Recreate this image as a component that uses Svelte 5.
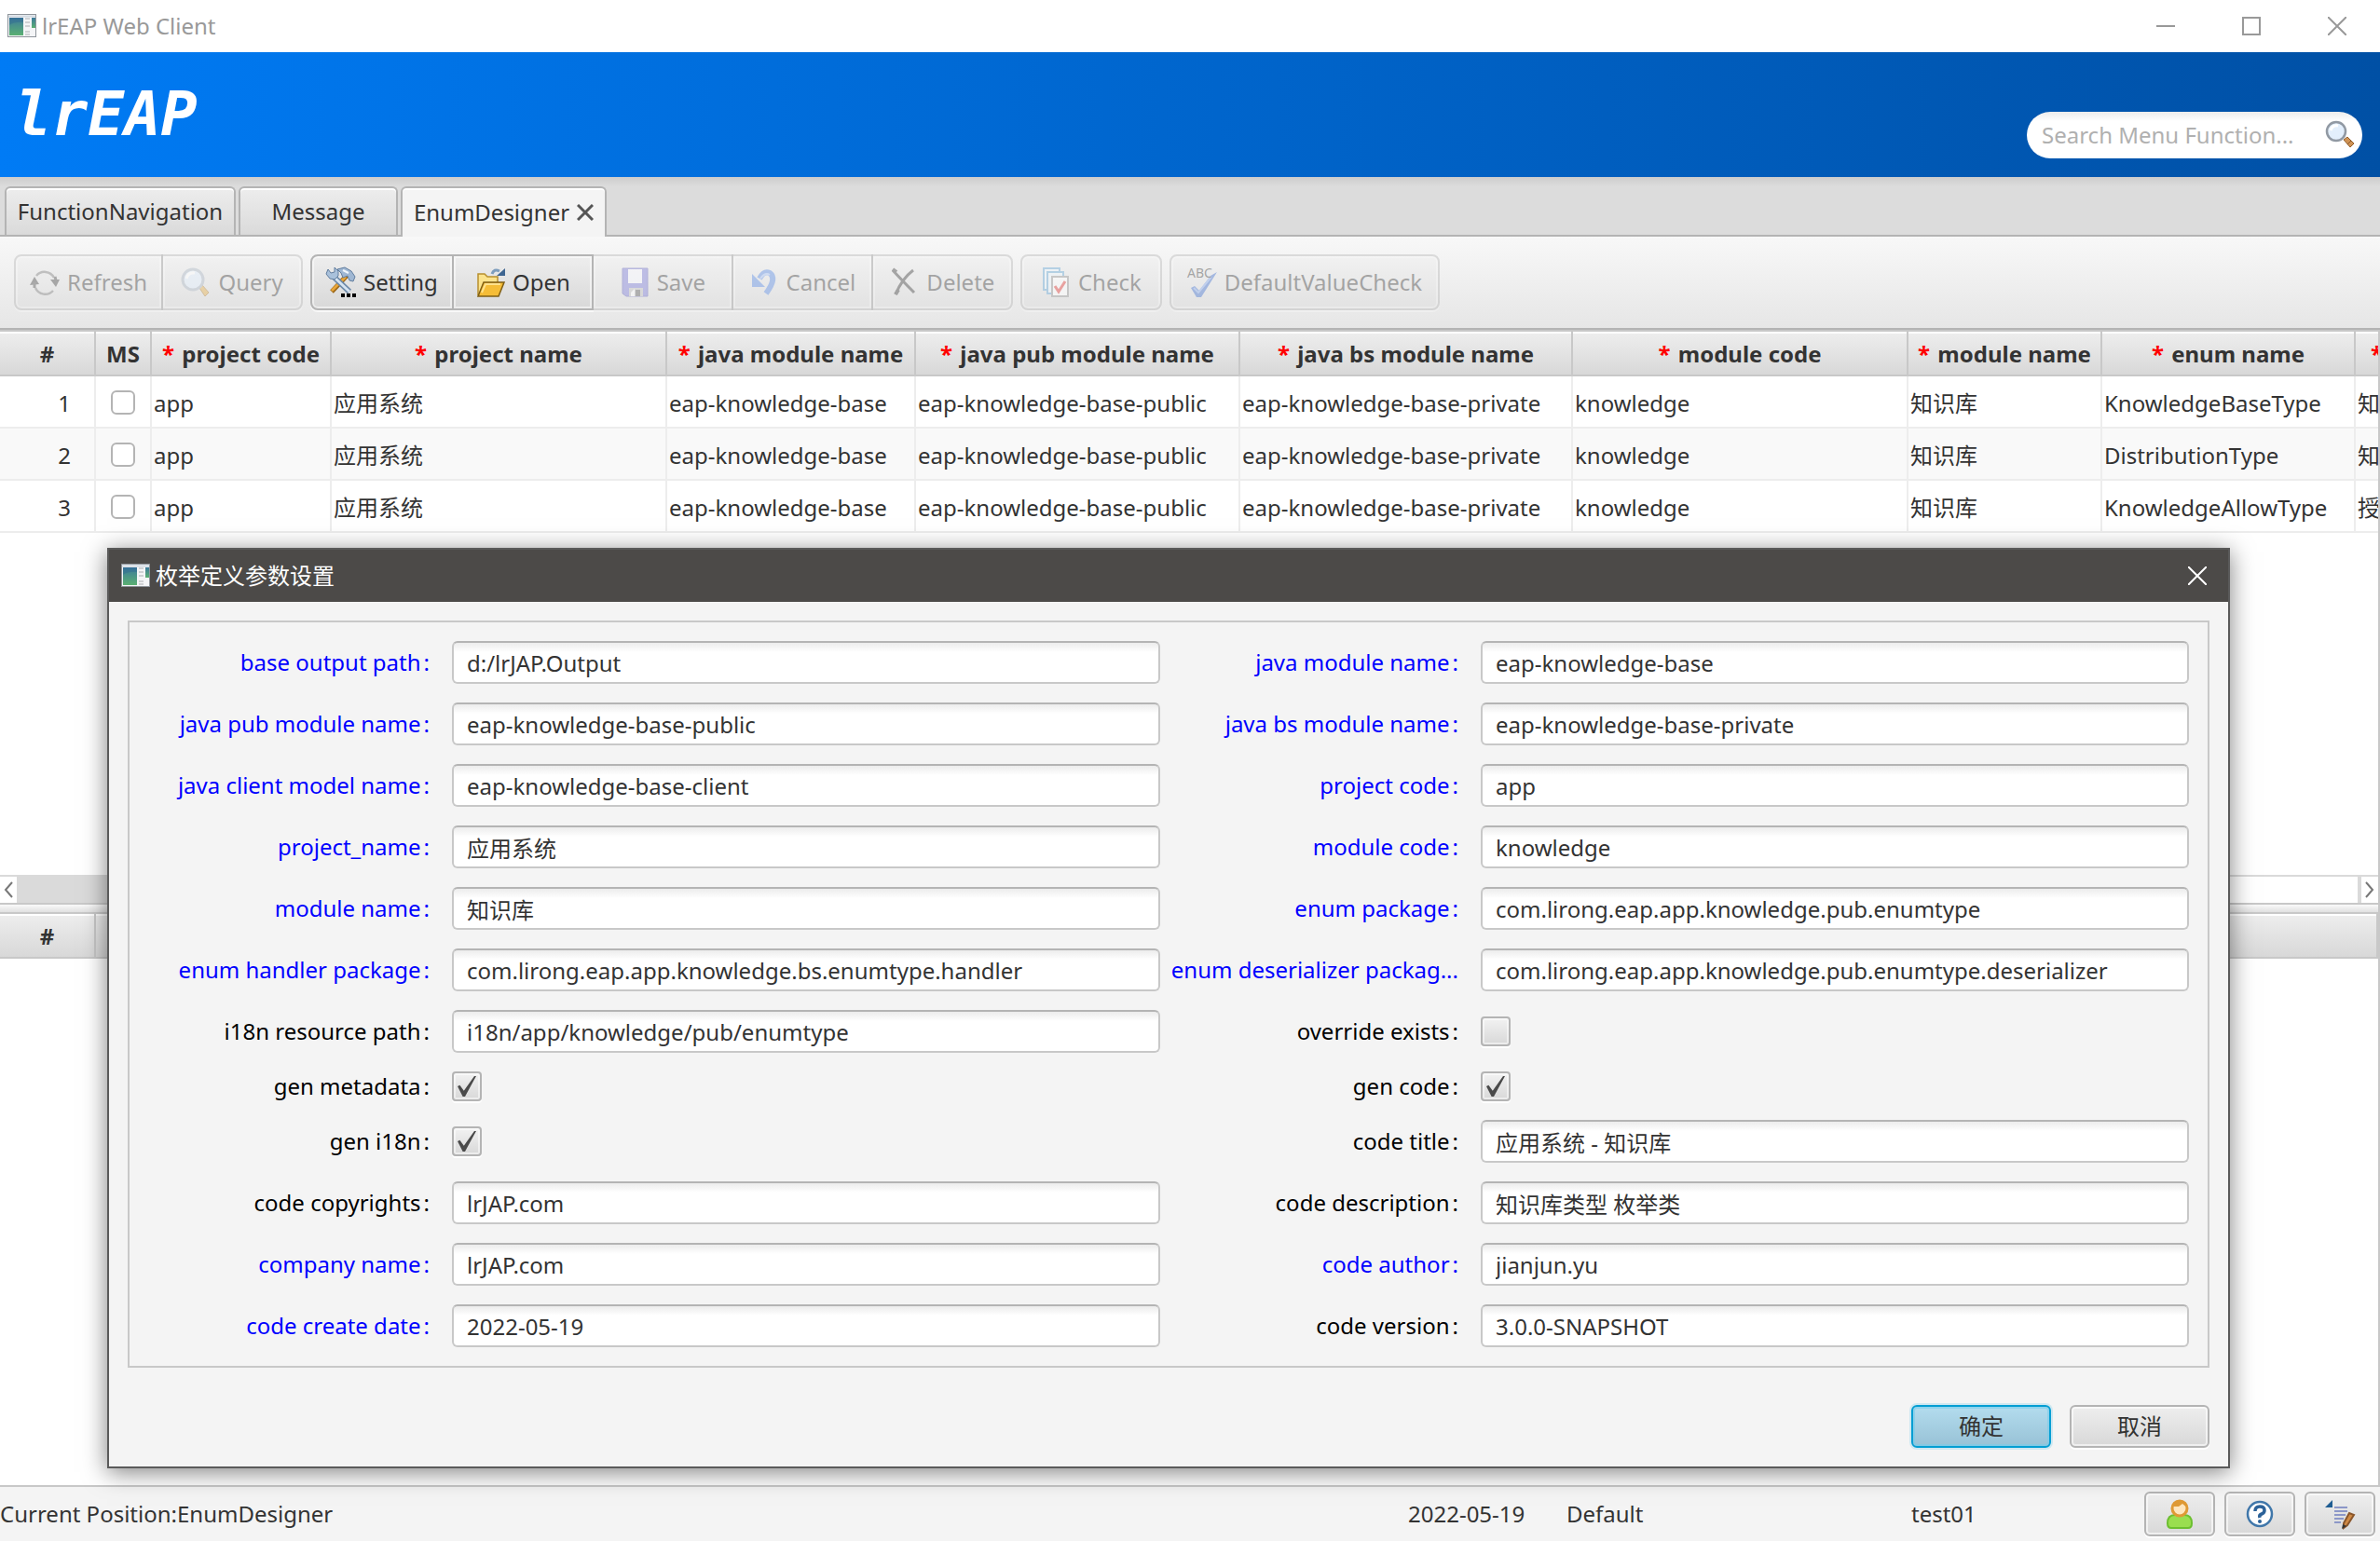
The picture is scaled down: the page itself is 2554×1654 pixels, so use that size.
<script lang="ts">
  type Field = {
    id: string;
    label: string;
    value?: string;
    checked?: boolean;
    type?: 'text' | 'checkbox';
    required?: boolean;
  };

  const columns = [
    { title: 'project code', width: 193 },
    { title: 'project name', width: 360 },
    { title: 'java module name', width: 267 },
    { title: 'java pub module name', width: 348 },
    { title: 'java bs module name', width: 357 },
    { title: 'module code', width: 360 },
    { title: 'module name', width: 208 },
    { title: 'enum name', width: 272 },
    { title: 'enum title', width: 180 },
  ];

  const rows = [
    ['app', '应用系统', 'eap-knowledge-base', 'eap-knowledge-base-public', 'eap-knowledge-base-private', 'knowledge', '知识库', 'KnowledgeBaseType', '知识库类型'],
    ['app', '应用系统', 'eap-knowledge-base', 'eap-knowledge-base-public', 'eap-knowledge-base-private', 'knowledge', '知识库', 'DistributionType', '知识分发'],
    ['app', '应用系统', 'eap-knowledge-base', 'eap-knowledge-base-public', 'eap-knowledge-base-private', 'knowledge', '知识库', 'KnowledgeAllowType', '授权类型'],
  ];

  const toolGroups = [
    [
      { icon: 'refresh', label: 'Refresh', disabled: true, size: 'wide' },
      { icon: 'query', label: 'Query', disabled: true, size: '' },
    ],
    [
      { icon: 'setting', label: 'Setting', disabled: false, size: '' },
      { icon: 'open', label: 'Open', disabled: false, size: '' },
      { icon: 'save', label: 'Save', disabled: true, size: '' },
      { icon: 'cancel', label: 'Cancel', disabled: true, size: '' },
      { icon: 'delete', label: 'Delete', disabled: true, size: '' },
    ],
    [{ icon: 'check', label: 'Check', disabled: true, size: '' }],
    [{ icon: 'spell', label: 'DefaultValueCheck', disabled: true, size: 'widest' }],
  ];

  // Listed row by row: left column, right column
  let fields: Field[] = $state([
    { id: 'outputPath', label: 'base output path', value: 'd:/lrJAP.Output', required: true },
    { id: 'javaModule', label: 'java module name', value: 'eap-knowledge-base', required: true },
    { id: 'javaPubModule', label: 'java pub module name', value: 'eap-knowledge-base-public', required: true },
    { id: 'javaBsModule', label: 'java bs module name', value: 'eap-knowledge-base-private', required: true },
    { id: 'javaClientModel', label: 'java client model name', value: 'eap-knowledge-base-client', required: true },
    { id: 'projectCode', label: 'project code', value: 'app', required: true },
    { id: 'projectName', label: 'project_name', value: '应用系统', required: true },
    { id: 'moduleCode', label: 'module code', value: 'knowledge', required: true },
    { id: 'moduleName', label: 'module name', value: '知识库', required: true },
    { id: 'enumPackage', label: 'enum package', value: 'com.lirong.eap.app.knowledge.pub.enumtype', required: true },
    { id: 'enumHandler', label: 'enum handler package', value: 'com.lirong.eap.app.knowledge.bs.enumtype.handler', required: true },
    { id: 'enumDeserializer', label: 'enum deserializer packag...', value: 'com.lirong.eap.app.knowledge.pub.enumtype.deserializer', required: true },
    { id: 'i18nPath', label: 'i18n resource path', value: 'i18n/app/knowledge/pub/enumtype' },
    { id: 'overrideExists', label: 'override exists', type: 'checkbox', checked: false },
    { id: 'genMetadata', label: 'gen metadata', type: 'checkbox', checked: true },
    { id: 'genCode', label: 'gen code', type: 'checkbox', checked: true },
    { id: 'genI18n', label: 'gen i18n', type: 'checkbox', checked: true },
    { id: 'codeTitle', label: 'code title', value: '应用系统 - 知识库' },
    { id: 'copyrights', label: 'code copyrights', value: 'lrJAP.com' },
    { id: 'description', label: 'code description', value: '知识库类型 枚举类' },
    { id: 'company', label: 'company name', value: 'lrJAP.com', required: true },
    { id: 'author', label: 'code author', value: 'jianjun.yu', required: true },
    { id: 'createDate', label: 'code create date', value: '2022-05-19', required: true },
    { id: 'version', label: 'code version', value: '3.0.0-SNAPSHOT' },
  ]);

  let search = $state('');
  let dialogOpen = $state(true);

  function closeDialog() {
    dialogOpen = false;
  }

  function openDialog(icon: string) {
    if (icon === 'setting') {
      dialogOpen = true;
    }
  }
</script>

{#snippet windowIcon()}
  <svg class="window-icon" viewBox="0 0 32 26" aria-hidden="true">
    <defs>
      <linearGradient id="screen" x1="0" y1="0" x2="0" y2="1">
        <stop offset="0" stop-color="#3c7a9c" />
        <stop offset="1" stop-color="#5bb072" />
      </linearGradient>
    </defs>
    <rect x="0.5" y="0.5" width="30" height="24" fill="#f4f5f7" stroke="#8f959b" />
    <path d="M1 2.5h29" stroke="#d3dae2" stroke-width="2" />
    <rect x="2" y="4" width="15" height="19" fill="url(#screen)" />
    <path d="M2 12Q8 8 17 9V4H2z" fill="#2e6590" opacity="0.4" />
    <path d="M19 5h5M19 9h5M19 13h5M19 19h5M19 22h5" stroke="#c2c5c9" stroke-width="1.5" />
    <rect x="26" y="4" width="4" height="11" fill="url(#screen)" />
  </svg>
{/snippet}

{#snippet toolIcon(name: string)}
  <svg class="icon" viewBox="0 0 32 32" aria-hidden="true">
    {#if name === 'refresh'}
      <path d="M7 9A11.500 11.500 0 0 1 26 11M25 25A11.500 11.500 0 0 1 6 22" fill="none" stroke="#777" stroke-width="2.500" />
      <path d="M27 10Q28 13 28 15" fill="none" stroke="#444" stroke-width="3" />
      <path d="M22 13h10l-4 8zM0 19l5-9 5 8z" fill="#3c3c3c" />
      <path d="M5 16v6" stroke="#444" stroke-width="3" />
    {:else if name === 'query'}
      <path d="M20 22l3-3 7 8-4 4z" fill="#e0a63c" stroke="#a8772a" />
      <circle cx="13" cy="13" r="11" fill="#dcebfb" stroke="#a3afbd" stroke-width="3" />
      <path d="M6 12Q8 5 15 6" fill="none" stroke="#fff" stroke-width="3" />
    {:else if name === 'setting'}
      <path d="M22 9L6 26" stroke="#9a6514" stroke-width="5" />
      <path d="M21 10L6 25" stroke="#e9a63a" stroke-width="3" />
      <path d="M12 2L20 0 27 4 31 10 29 15 25 14 23 9 18 11 16 6z" fill="#9fb7d3" stroke="#627e9f" />
      <path d="M18 3l6 3" stroke="#f1f6fb" stroke-width="2" />
      <path d="M8 10L25 26" stroke="#6b88a8" stroke-width="6" />
      <path d="M8 10L25 26" stroke="#d5e3f1" stroke-width="3" />
      <path d="M2 2l3 4 4-1 0-5 4 4v5l-4 4-5-1-4-5z" fill="#a9c1db" stroke="#627e9f" />
      <path d="M16 28h4v4h-4zM22 28h4v4h-4zM28 28h4v4h-4z" fill="#000" />
    {:else if name === 'open'}
      <path d="M3 30V7h7l3 3h11v8" fill="#fbe38c" stroke="#b8902f" stroke-width="1.500" />
      <path d="M3 31L9 16h22l-6 15z" fill="#f5bd37" stroke="#7e5e14" stroke-width="1.500" />
      <path d="M7 27L11 18h16" fill="none" stroke="#ffe28d" stroke-width="2" />
      <path d="M18 7Q20 1 26 4" fill="none" stroke="#7d9dbd" stroke-width="3" />
      <path d="M23 9h9V1z" fill="#3e6591" />
    {:else if name === 'save'}
      <path d="M3 1h27v30H7l-4-3z" fill="#7272d4" stroke="#5656b5" />
      <path d="M9 2h15v15H9z" fill="#f7f8ff" />
      <path d="M10 22h15v9H10z" fill="#bbb" />
      <path d="M17 24h5v7h-5z" fill="#555" />
      <path d="M12 27l4-4v8h-4z" fill="#fff" />
    {:else if name === 'cancel'}
      <path d="M11 12Q16 3 22 6Q30 12 18 28" fill="none" stroke="#4f83e0" stroke-width="6" />
      <path d="M3 7v14h14z" fill="#4f83e0" />
      <path d="M12 12Q17 5 22 8" fill="none" stroke="#9dbcf5" stroke-width="2" />
    {:else if name === 'delete'}
      <path d="M4 3Q13 13 27 27M26 3Q14 12 7 29" fill="none" stroke="#333" stroke-width="3" />
      <path d="M4 2l4 3M7 29l3-5" stroke="#333" stroke-width="4" />
    {:else if name === 'check'}
      <path d="M3 1h17v23H3z" fill="#eaf4fc" stroke="#5b9fd0" stroke-width="2" />
      <path d="M7 5h17v23H7z" fill="#eaf4fc" stroke="#5b9fd0" stroke-width="2" />
      <path d="M12 10h17v21H12z" fill="#fff" stroke="#8c8c8c" stroke-width="2" />
      <path d="M15 20l4 6 7-11" fill="none" stroke="#e0302b" stroke-width="3" />
    {:else if name === 'spell'}
      <path d="M4 22l4-2 5 5L25 9l7-4-17 27h-5z" fill="#3667c9" />
      <path d="M7 22l5 5L26 10" fill="none" stroke="#7fa3ea" stroke-width="2" />
      <text class="icon-text" x="0" y="11">ABC</text>
    {/if}
  </svg>
{/snippet}

<div class="app">
  <div class="titlebar">
    {@render windowIcon()}
    <span class="caption">lrEAP Web Client</span>
    <button class="win-btn" aria-label="Minimize">
      <svg viewBox="0 0 20 20"><path d="M0 10h20" /></svg>
    </button>
    <button class="win-btn" aria-label="Maximize">
      <svg viewBox="0 0 20 20"><path d="M1 1h18v18H1z" /></svg>
    </button>
    <button class="win-btn" aria-label="Close">
      <svg viewBox="0 0 20 20"><path d="M0 0l20 20M20 0L0 20" /></svg>
    </button>
  </div>

  <header class="banner">
    <span class="logo">lrEAP</span>
    <div class="search">
      <input type="text" aria-label="Search Menu Function" placeholder="Search Menu Function..." bind:value={search} />
      <svg class="icon" viewBox="0 0 32 32" aria-hidden="true">
        <path d="M20 21l4-3 7 7-4 4z" fill="#cf9254" stroke="#96602c" />
        <path d="M24 26l4-4" stroke="#8a5a2c" />
        <circle cx="12" cy="12" r="10" fill="#e3effc" stroke="#9199a3" stroke-width="2.500" />
        <path d="M6 11Q8 5 14 6" fill="none" stroke="#fff" stroke-width="3" />
      </svg>
    </div>
  </header>

  <nav class="tabs">
    <button class="tab">FunctionNavigation</button>
    <button class="tab narrow">Message</button>
    <button class="tab active" aria-current="page">
      EnumDesigner
      <svg viewBox="0 0 18 18" aria-hidden="true"><path d="M1 1l16 16M17 1L1 17" /></svg>
    </button>
  </nav>

  <div class="toolbar">
    {#each toolGroups as group}
      <div class="group">
        {#each group as tool}
          <button class="tool {tool.size}" disabled={tool.disabled} onclick={() => openDialog(tool.icon)}>
            {@render toolIcon(tool.icon)}
            {tool.label}
          </button>
        {/each}
      </div>
    {/each}
  </div>

  <main class="panes">
    <section class="pane">
      <div class="scroller">
        <table>
          <colgroup>
            <col style="width: 103px" />
            <col style="width: 60px" />
            {#each columns as column}
              <col style="width: {column.width}px" />
            {/each}
          </colgroup>
          <thead>
            <tr>
              <th>#</th>
              <th>MS</th>
              {#each columns as column}
                <th><span class="star">*</span> {column.title}</th>
              {/each}
            </tr>
          </thead>
          <tbody>
            {#each rows as row, index}
              <tr>
                <td class="number">{index + 1}</td>
                <td class="pick"><input type="checkbox" aria-label="Select row {index + 1}" /></td>
                {#each row as cell}
                  <td>{cell}</td>
                {/each}
              </tr>
            {/each}
          </tbody>
        </table>
      </div>
      <div class="scrollbar">
        <button class="arrow" aria-label="Scroll left">
          <svg viewBox="0 0 10 18"><path d="M9 1L2 9l7 8" /></svg>
        </button>
        <div class="track"><div class="thumb"></div></div>
        <button class="arrow" aria-label="Scroll right">
          <svg viewBox="0 0 10 18"><path d="M1 1l7 8-7 8" /></svg>
        </button>
      </div>
    </section>

    <div class="splitter"></div>

    <section class="pane">
      <table>
        <colgroup>
          <col style="width: 103px" />
          <col />
        </colgroup>
        <thead>
          <tr><th>#</th><th></th></tr>
        </thead>
      </table>
    </section>
  </main>

  <footer class="status">
    <span>Current Position:EnumDesigner</span>
    <span>2022-05-19</span>
    <span>Default</span>
    <span>test01</span>
    <div class="status-buttons">
      <button class="btn" aria-label="User">
        <svg class="icon" viewBox="0 0 32 32">
          <path d="M3 26q0-9 8-9h10q8 0 8 9 0 5-4 5H7q-4 0-4-5z" fill="#9ade50" stroke="#6cbf2f" stroke-width="2" />
          <circle cx="16" cy="10" r="8" fill="#ffe6bd" stroke="#df9a35" stroke-width="3" />
          <path d="M9 8Q12 1 17 2t7 7l-5-4-4 3z" fill="#df9a35" />
        </svg>
      </button>
      <button class="btn" aria-label="Help">
        <svg class="icon" viewBox="0 0 32 32">
          <circle cx="16" cy="16" r="13" fill="#fff" stroke="#4077aa" stroke-width="2.500" />
          <path d="M11 13q0-5 5-5t5 4q0 3-3 4t-2 4" fill="none" stroke="#2c6299" stroke-width="3.500" />
          <circle cx="16" cy="24" r="2" fill="#2c6299" />
        </svg>
      </button>
      <button class="btn" aria-label="Log">
        <svg class="icon" viewBox="0 0 32 32">
          <path d="M0 9l8-8v8z" fill="#1f5d92" />
          <path d="M10 9h14M10 13h14M10 17h12M10 21h10M10 25h7" stroke="#8c97c8" stroke-width="2" />
          <path d="M20 26l6-11 5 2-7 11-4 3z" fill="#d08a45" stroke="#8a562a" stroke-width="2" />
          <path d="M18 32l1-5 4 2z" fill="#333" />
        </svg>
      </button>
    </div>
  </footer>

  {#if dialogOpen}
    <div class="dialog" role="dialog" aria-labelledby="dialog-title">
      <div class="dialog-title">
        {@render windowIcon()}
        <span class="caption" id="dialog-title">枚举定义参数设置</span>
        <button class="win-btn" aria-label="Close dialog" onclick={closeDialog}>
          <svg viewBox="0 0 20 20"><path d="M0 0l20 20M20 0L0 20" /></svg>
        </button>
      </div>
      <form class="dialog-body" onsubmit={(event) => event.preventDefault()}>
        <div class="fields">
          {#each fields as field (field.id)}
            <div class="field">
              <label for={field.id} class:required={field.required}>
                <span>{field.label}</span>{#if !field.label.endsWith('...')}<span>:</span>{/if}
              </label>
              {#if field.type === 'checkbox'}
                <input type="checkbox" id={field.id} bind:checked={field.checked} />
              {:else}
                <input type="text" id={field.id} bind:value={field.value} />
              {/if}
            </div>
          {/each}
        </div>
        <div class="actions">
          <button class="btn primary" type="submit">确定</button>
          <button class="btn" type="button" onclick={closeDialog}>取消</button>
        </div>
      </form>
    </div>
  {/if}
</div>

<style>
  :global(body) {
    margin: 0;
  }

  .app {
    position: relative;
    display: flex;
    flex-direction: column;
    min-height: 100vh;
    overflow: hidden;
    background: #fff;
    color: #333;
    font-family: 'Noto Sans', 'Noto Sans CJK SC', sans-serif;
    font-size: 24px;
    line-height: 32px;
  }

  .app *,
  .app *::before {
    box-sizing: border-box;
  }

  button,
  input {
    margin: 0;
    color: inherit;
    font: inherit;
  }

  .icon {
    flex: none;
    width: 32px;
    height: 32px;
    overflow: visible;
  }

  .icon-text {
    fill: #333;
    font-size: 14px;
  }

  /* Window title bars */
  .titlebar,
  .dialog-title {
    display: flex;
    align-items: center;
    height: 56px;
  }

  .titlebar {
    padding-left: 8px;
    color: #999;
  }

  .window-icon {
    flex: none;
    width: 32px;
    height: 26px;
    margin-right: 5px;
  }

  .caption {
    flex: 1;
  }

  .win-btn {
    display: flex;
    align-items: center;
    justify-content: center;
    width: 92px;
    height: 100%;
    padding: 0;
    border: none;
    background: none;
  }

  .win-btn svg {
    width: 20px;
    height: 20px;
    fill: none;
    stroke: currentColor;
    stroke-width: 2;
  }

  /* Banner */
  .banner {
    display: flex;
    align-items: center;
    justify-content: space-between;
    height: 134px;
    padding: 0 19px 0 16px;
    background: linear-gradient(to right, #007bf5, #0050a5);
  }

  .logo {
    color: #fff;
    font-family: 'DejaVu Sans Mono', monospace;
    font-size: 65px;
    font-style: italic;
    font-weight: bold;
    line-height: 72px;
  }

  .search {
    display: flex;
    align-items: center;
    width: 360px;
    height: 50px;
    margin-top: 44px;
    padding: 0 8px 0 16px;
    border-radius: 25px;
    background: linear-gradient(#ececec, #fff 10px);
  }

  .search input {
    flex: 1;
    min-width: 0;
    padding: 0;
    border: none;
    outline: none;
    background: none;
  }

  .search input::placeholder {
    color: #b0b0b0;
    opacity: 1;
  }

  /* Tabs */
  .tabs {
    display: flex;
    align-items: flex-end;
    gap: 3px;
    height: 64px;
    padding-left: 5px;
    border-bottom: 2px solid #b4b4b4;
    background: linear-gradient(#cdcdcd, #dcdcdc 10px);
  }

  .tab {
    display: flex;
    align-items: center;
    justify-content: center;
    gap: 8px;
    min-width: 248px;
    height: 52px;
    padding: 0 8px;
    border: 2px solid #b4b4b4;
    border-bottom: none;
    border-radius: 6px 6px 0 0;
    background: linear-gradient(#ededed, #dadada);
    box-shadow: inset 0 2px #fff;
  }

  .tab.narrow {
    min-width: 171px;
  }

  .tab.active {
    min-width: 221px;
    height: 54px;
    margin-bottom: -2px;
    background: #f4f4f4;
  }

  .tab svg {
    width: 18px;
    height: 18px;
    fill: none;
    stroke: #555;
    stroke-width: 3;
  }

  /* Toolbar */
  .toolbar {
    display: flex;
    align-items: center;
    gap: 8px;
    height: 100px;
    padding: 0 15px;
    border-bottom: 2px solid #b4b4b4;
    background: linear-gradient(#f8f8f8, #e6e6e6);
  }

  .group {
    display: flex;
  }

  .tool {
    display: flex;
    align-items: center;
    justify-content: center;
    gap: 8px;
    min-width: 152px;
    height: 60px;
    margin-left: -2px;
    padding: 0 15px;
    border: 2px solid #b4b4b4;
    background: linear-gradient(#eee, #d8d8d8);
    box-shadow:
      inset 0 0 0 2px rgba(255, 255, 255, 0.5),
      0 2px #f8f8f8;
  }

  .tool.wide {
    min-width: 160px;
  }

  .tool.widest {
    min-width: 290px;
  }

  .tool:first-child {
    margin-left: 0;
    border-top-left-radius: 8px;
    border-bottom-left-radius: 8px;
  }

  .tool:last-child {
    border-top-right-radius: 8px;
    border-bottom-right-radius: 8px;
  }

  .tool:disabled {
    opacity: 0.4;
  }

  /* Tables */
  .panes {
    display: flex;
    flex: 1;
    flex-direction: column;
    border-right: 2px solid #c8c8c8;
  }

  .pane {
    display: flex;
    flex: 1 1 0;
    flex-direction: column;
    overflow: hidden;
  }

  .scroller {
    flex: 1;
    overflow: hidden;
  }

  .splitter {
    height: 10px;
    border-top: 2px solid #c8c8c8;
    background: linear-gradient(#fafafa, #e0e0e0);
  }

  table {
    width: 100%;
    border-collapse: separate;
    border-spacing: 0;
    table-layout: fixed;
  }

  th {
    height: 50px;
    padding: 2px 0 0;
    border: solid #c8c8c8;
    border-width: 2px 2px 2px 0;
    background: linear-gradient(#eee, #d8d8d8);
    box-shadow: inset 0 2px #fff;
    font-weight: bold;
    white-space: nowrap;
    overflow: hidden;
  }

  .star {
    margin-right: 2px;
    color: #f00;
  }

  td {
    height: 56px;
    padding: 4px 2px 0;
    border: solid #ededed;
    border-width: 0 2px 2px 0;
    white-space: nowrap;
    overflow: hidden;
  }

  tbody tr:nth-child(even) {
    background: #f9f9f9;
  }

  .number {
    padding-right: 25px;
    text-align: right;
  }

  .pick {
    padding-top: 2px;
  }

  .pick input {
    display: block;
    width: 26px;
    height: 26px;
    margin: 0 auto;
    appearance: none;
    border: 2px solid #b4b4b4;
    border-radius: 6px;
    background: #fff;
  }

  .scrollbar {
    display: flex;
    height: 30px;
    border-top: 2px solid #dadada;
  }

  .arrow {
    display: flex;
    align-items: center;
    justify-content: center;
    width: 18px;
    padding: 0;
    border: none;
    background: #fff;
  }

  .arrow svg {
    width: 10px;
    height: 18px;
    fill: none;
    stroke: #777;
    stroke-width: 2;
  }

  .track {
    flex: 1;
    border-right: 4px solid #dadada;
  }

  .thumb {
    width: 85%;
    height: 100%;
    background: #dadada;
  }

  /* Buttons */
  .btn {
    display: flex;
    align-items: center;
    justify-content: center;
    padding: 0;
    border: 2px solid #b4b4b4;
    border-radius: 6px;
    background: linear-gradient(#eee, #d8d8d8);
    box-shadow:
      inset 0 0 0 2px rgba(255, 255, 255, 0.6),
      0 2px #fff;
  }

  .btn.primary {
    border-color: #039ed3;
    background: linear-gradient(#b3dcee, #98c2d6);
    box-shadow:
      inset 0 0 0 2px rgba(120, 205, 235, 0.6),
      0 0 0 2px #cfe8f1;
  }

  /* Status bar */
  .status {
    display: grid;
    grid-template-columns: 1511fr 170fr 370fr 250fr auto;
    align-items: center;
    height: 60px;
    border-top: 2px solid #c8c8c8;
    background: #f4f4f4;
  }

  .status-buttons {
    display: flex;
    gap: 10px;
    padding-right: 5px;
  }

  .status-buttons .btn {
    width: 76px;
    height: 48px;
  }

  /* Dialog window */
  .dialog {
    position: absolute;
    top: 588px;
    right: 161px;
    left: 115px;
    border: 2px solid #5a5a5a;
    background: #f4f4f4;
    box-shadow: 0 4px 24px rgba(0, 0, 0, 0.5);
  }

  .dialog-title {
    padding-left: 13px;
    background: #4c4a48;
    color: #fff;
  }

  .dialog-title .win-btn {
    width: 66px;
  }

  .dialog-body {
    padding: 20px;
  }

  .fields {
    display: grid;
    grid-template-columns: 1fr 1fr;
    gap: 20px 10px;
    padding: 20px 20px 20px 12px;
    border: 2px solid #c8c8c8;
  }

  .field {
    display: grid;
    grid-template-columns: 310px 1fr;
    gap: 24px;
    align-items: center;
  }

  .field label {
    display: flex;
    gap: 3px;
    justify-content: flex-end;
    color: #000;
    white-space: nowrap;
  }

  .field label.required {
    color: #00f;
  }

  .field input[type='text'] {
    width: 100%;
    min-width: 0;
    height: 46px;
    padding: 0 14px;
    border: 2px solid #c8c8c8;
    border-top-color: #b4b4b4;
    border-radius: 6px;
    background: linear-gradient(#ececec, #fff 10px);
  }

  .field input[type='checkbox'] {
    display: flex;
    align-items: center;
    justify-content: center;
    width: 32px;
    height: 32px;
    appearance: none;
    border: 2px solid #b4b4b4;
    border-radius: 4px;
    background: linear-gradient(#f2f2f2, #d8d8d8);
    box-shadow:
      inset 0 0 0 2px rgba(255, 255, 255, 0.5),
      0 2px #fff;
  }

  .field input[type='checkbox']:checked::before {
    width: 20px;
    height: 22px;
    background: #4a4a4a;
    clip-path: polygon(0 50%, 12% 44%, 34% 72%, 90% 0, 100% 0, 40% 100%, 28% 100%);
    content: '';
  }

  .actions {
    display: flex;
    gap: 20px;
    justify-content: flex-end;
    padding-top: 40px;
  }

  .actions .btn {
    width: 150px;
    height: 46px;
  }
</style>
